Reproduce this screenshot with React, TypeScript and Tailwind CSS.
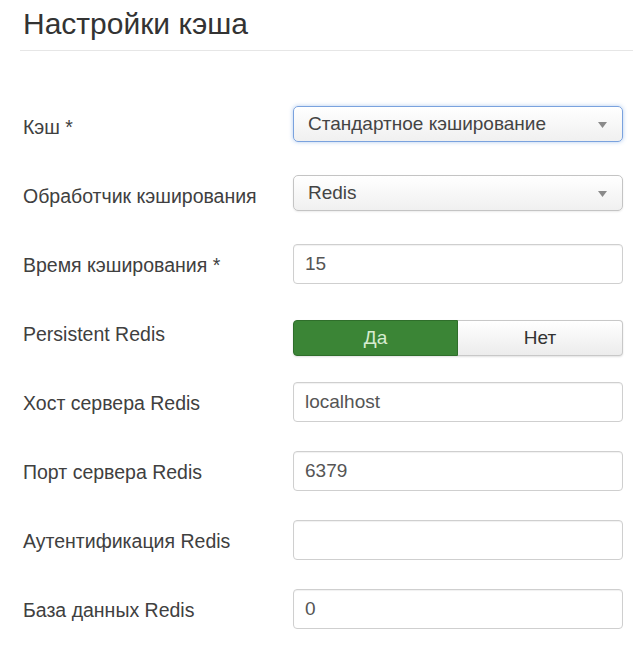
import React from 'react';

const labelCls = 'w-[270px] h-[44px] flex items-center text-[19.5px] text-[#404040]';

function Row({ label, children, className = '' }: { label: string; children: React.ReactNode; className?: string }) {
  return (
    <div className={`flex items-start h-[69px] ${className}`}>
      <div className={labelCls}>{label}</div>
      {children}
    </div>
  );
}

function SelectBox({ value, focused = false }: { value: string; focused?: boolean }) {
  return (
    <div
      className={`w-[330px] h-[36px] rounded-[5px] border flex items-center justify-between pl-[14px] pr-[15px] bg-gradient-to-b from-white to-[#f0f0f0] text-[19px] text-[#444] ${
        focused ? 'border-[#7aa2de] shadow-[0_0_4px_rgba(82,140,220,0.45)]' : 'border-[#c4c4c4] shadow-[0_1px_2px_rgba(0,0,0,0.08)]'
      }`}
    >
      <span>{value}</span>
      <svg width="9" height="6" viewBox="0 0 9 6" className="mt-[1px]">
        <path d="M0 0h9L4.5 6z" fill="#8a8a8a" />
      </svg>
    </div>
  );
}

function TextBox({ value }: { value: string }) {
  return (
    <div className="w-[330px] h-[40px] rounded-[4px] border border-[#cfcfcf] bg-white flex items-center pl-[11px] text-[19px] text-[#555] shadow-[inset_0_1px_1px_rgba(0,0,0,0.06)]">
      {value}
    </div>
  );
}

export default function App() {
  return (
    <div className="w-[633px] h-[646px] bg-white font-['Liberation_Sans',Arial,sans-serif] overflow-hidden">
      <div className="pl-[20px] pt-[6px]">
        <h2 className="pl-[3px] text-[30px] leading-[36px] text-[#333] font-normal">Настройки кэша</h2>
        <div className="mt-[8px] border-t border-[#e6e6e6]" />
      </div>

      <div className="pl-[23px] pt-[55px]">
        <Row label="Кэш *">
          <SelectBox value="Стандартное кэширование" focused />
        </Row>
        <Row label="Обработчик кэширования">
          <SelectBox value="Redis" />
        </Row>
        <Row label="Время кэширования *">
          <TextBox value="15" />
        </Row>
        <Row label="Persistent Redis">
          <div className="mt-[7px] w-[330px] h-[36px] flex rounded-[4px] shadow-[0_1px_2px_rgba(0,0,0,0.12)] text-[19px]">
            <div className="w-[165px] flex items-center justify-center rounded-l-[4px] bg-[#3b8536] border border-[#2f6e2b] text-[#d6ecd1]">
              Да
            </div>
            <div className="flex-1 flex items-center justify-center rounded-r-[4px] border border-l-0 border-[#c8c8c8] bg-gradient-to-b from-white to-[#ececec] text-[#333]">
              Нет
            </div>
          </div>
        </Row>
        <Row label="Хост сервера Redis">
          <TextBox value="localhost" />
        </Row>
        <Row label="Порт сервера Redis">
          <TextBox value="6379" />
        </Row>
        <Row label="Аутентификация Redis">
          <TextBox value="" />
        </Row>
        <Row label="База данных Redis">
          <TextBox value="0" />
        </Row>
      </div>
    </div>
  );
}
